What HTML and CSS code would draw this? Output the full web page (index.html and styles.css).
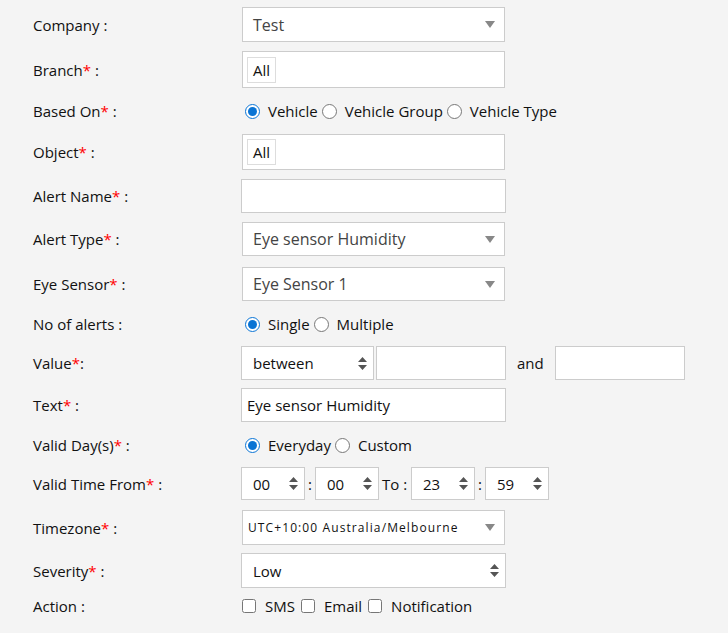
FILE: index.html
```html
<!DOCTYPE html>
<html lang="en">

<head>
    <meta charset="UTF-8">
    <meta name="viewport" content="width=device-width, initial-scale=1.0">
    <title>Alert</title>
    <link rel="stylesheet" href="styles.css">
</head>

<body>
    <form class="alertForm">
        <div class="row">
            <label class="lbl">Company :</label>
            <div class="chosen">
                <span>Test</span>
                <svg class="tri" width="10" height="7" viewBox="0 0 10 7"><path d="M0 0h10L5 7z" /></svg>
            </div>
        </div>
        <div class="row">
            <label class="lbl">Branch<b>*</b> :</label>
            <div class="multi"><span class="chip">All</span></div>
        </div>
        <div class="row radios">
            <label class="lbl">Based On<b>*</b> :</label>
            <div class="opts">
                <label><input type="radio" name="based" checked>Vehicle</label>
                <label><input type="radio" name="based">Vehicle Group</label>
                <label><input type="radio" name="based">Vehicle Type</label>
            </div>
        </div>
        <div class="row">
            <label class="lbl">Object<b>*</b> :</label>
            <div class="multi obj"><span class="chip">All</span></div>
        </div>
        <div class="row">
            <label class="lbl">Alert Name<b>*</b> :</label>
            <input class="txt" type="text">
        </div>
        <div class="row">
            <label class="lbl">Alert Type<b>*</b> :</label>
            <div class="chosen short">
                <span>Eye sensor Humidity</span>
                <svg class="tri" width="10" height="7" viewBox="0 0 10 7"><path d="M0 0h10L5 7z" /></svg>
            </div>
        </div>
        <div class="row eye">
            <label class="lbl">Eye Sensor<b>*</b> :</label>
            <div class="chosen short">
                <span>Eye Sensor 1</span>
                <svg class="tri" width="10" height="7" viewBox="0 0 10 7"><path d="M0 0h10L5 7z" /></svg>
            </div>
        </div>
        <div class="row radios">
            <label class="lbl">No of alerts :</label>
            <div class="opts">
                <label><input type="radio" name="num" checked>Single</label>
                <label><input type="radio" name="num">Multiple</label>
            </div>
        </div>
        <div class="row up1">
            <label class="lbl">Value<b>*</b>:</label>
            <div class="sel w132">
                <span>between</span>
                <svg class="ud" width="9" height="13" viewBox="0 0 9 13"><path d="M4.5 0L9 5H0z M0 8h9L4.5 13z" /></svg>
            </div>
            <input class="txt w130 ml3" type="text">
            <span class="and">and</span>
            <input class="txt w130" type="text">
        </div>
        <div class="row up1">
            <label class="lbl">Text<b>*</b> :</label>
            <input class="txt" type="text" value="Eye sensor Humidity">
        </div>
        <div class="row radios">
            <label class="lbl">Valid Day(s)<b>*</b> :</label>
            <div class="opts">
                <label><input type="radio" name="days" checked>Everyday</label>
                <label><input type="radio" name="days">Custom</label>
            </div>
        </div>
        <div class="row time up1">
            <label class="lbl">Valid Time From<b>*</b> :</label>
            <div class="sel w64">
                <span>00</span>
                <svg class="ud" width="9" height="13" viewBox="0 0 9 13"><path d="M4.5 0L9 5H0z M0 8h9L4.5 13z" /></svg>
            </div>
            <span class="colon">:</span>
            <div class="sel w64">
                <span>00</span>
                <svg class="ud" width="9" height="13" viewBox="0 0 9 13"><path d="M4.5 0L9 5H0z M0 8h9L4.5 13z" /></svg>
            </div>
            <span class="to">To :</span>
            <div class="sel w64">
                <span>23</span>
                <svg class="ud" width="9" height="13" viewBox="0 0 9 13"><path d="M4.5 0L9 5H0z M0 8h9L4.5 13z" /></svg>
            </div>
            <span class="colon">:</span>
            <div class="sel w64">
                <span>59</span>
                <svg class="ud" width="9" height="13" viewBox="0 0 9 13"><path d="M4.5 0L9 5H0z M0 8h9L4.5 13z" /></svg>
            </div>
        </div>
        <div class="row tzRow">
            <label class="lbl">Timezone<b>*</b> :</label>
            <div class="chosen tz">
                <span>UTC+10:00 Australia/Melbourne</span>
                <svg class="tri" width="10" height="7" viewBox="0 0 10 7"><path d="M0 0h10L5 7z" /></svg>
            </div>
        </div>
        <div class="row up1">
            <label class="lbl">Severity<b>*</b> :</label>
            <div class="sel w265">
                <span>Low</span>
                <svg class="ud" width="9" height="13" viewBox="0 0 9 13"><path d="M4.5 0L9 5H0z M0 8h9L4.5 13z" /></svg>
            </div>
        </div>
        <div class="row action">
            <label class="lbl">Action :</label>
            <div class="opts checks">
                <label><input type="checkbox">SMS</label>
                <label><input type="checkbox">Email</label>
                <label><input type="checkbox">Notification</label>
            </div>
        </div>
    </form>
</body>

</html>
```

FILE: styles.css
```css
* {
    margin: 0;
    padding: 0;
    box-sizing: border-box;
}

body {
    background: #f4f4f4;
    font-family: "Open Sans", "Noto Sans", sans-serif;
    font-size: 15px;
    color: #111;
}

.alertForm {
    display: flex;
    flex-direction: column;
    gap: 9px;
    padding: 7px 0 0 33px;
}

.row {
    display: flex;
    align-items: center;
}

.row.radios {
    height: 28px;
}

.row.eye {
    margin-top: 2px;
}

.row.up1 {
    margin-top: -1px;
}

.row.tzRow {
    margin-top: 1px;
}

.row.action {
    height: 20px;
    margin-top: -1px;
}

.lbl {
    width: 208px;
    flex-shrink: 0;
}

.lbl b {
    color: #f00;
    font-weight: normal;
}

/* chosen style dropdown */
.chosen {
    display: flex;
    align-items: center;
    justify-content: space-between;
    margin-left: 1px;
    width: 263px;
    height: 35px;
    padding: 0 9px 0 10px;
    background: #fff;
    border: 1px solid #ccc;
    font-size: 16px;
    color: #444;
}

.chosen.short {
    height: 34px;
}

.chosen.tz {
    font-size: 12px;
    letter-spacing: 1.1px;
    color: #111;
    padding-left: 5px;
}

.tri {
    fill: #888;
}

.multi {
    display: flex;
    align-items: center;
    margin-left: 1px;
    width: 263px;
    height: 37px;
    padding: 0 4px;
    background: #fff;
    border: 1px solid #ccc;
}

.multi.obj {
    height: 36px;
}

.chip {
    display: flex;
    align-items: center;
    height: 26px;
    padding: 0 5px;
    border: 1px solid #ddd;
}

.txt {
    width: 265px;
    height: 34px;
    padding: 0 5px;
    background: #fff;
    border: 1px solid #ccc;
    font: inherit;
    color: #111;
    outline: none;
}

/* native looking select */
.sel {
    display: flex;
    align-items: center;
    justify-content: space-between;
    height: 34px;
    padding: 0 6px 0 11px;
    background: #fff;
    border: 1px solid #ccc;
}

.ud {
    fill: #555;
}

.w132 {
    width: 133px;
}

.w130 {
    width: 130px;
}

.w64 {
    width: 64px;
}

.w265 {
    width: 265px;
    height: 35px;
}

.ml3 {
    margin-left: 2px;
}

.and {
    width: 49px;
    padding-left: 11px;
}

.time .sel {
    height: 33px;
}

.colon {
    width: 10px;
    text-align: center;
}

.to {
    width: 32px;
    padding-left: 3px;
}

.opts {
    display: flex;
    align-items: center;
}

.opts label {
    display: flex;
    align-items: center;
}

.opts input {
    width: 15px;
    height: 15px;
    margin: 0 8px 0 4px;
    accent-color: #0a74d4;
}

.checks input {
    width: 14px;
    height: 14px;
    margin: 0 9px 0 1px;
}

.checks label {
    margin-right: 5px;
}
```
